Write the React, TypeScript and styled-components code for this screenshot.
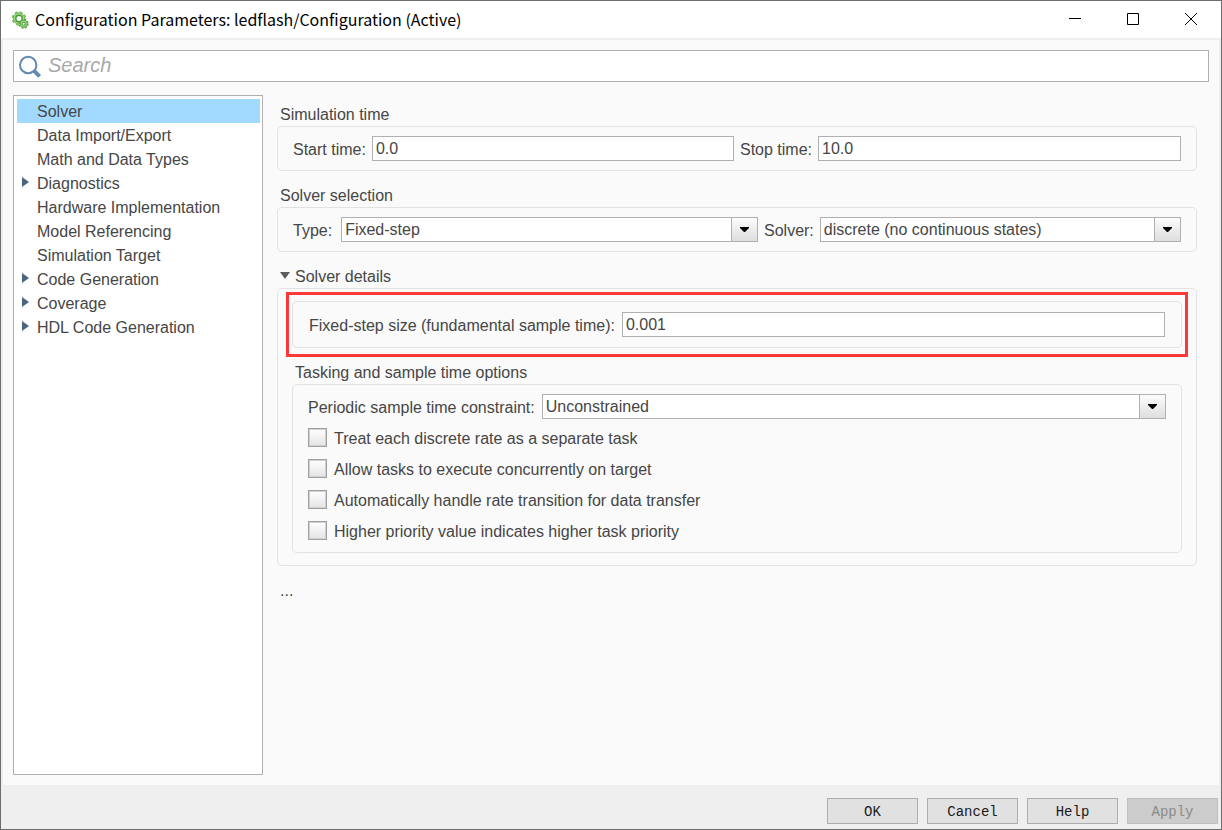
import React from "react";
import styled, { createGlobalStyle } from "styled-components";

const GlobalStyle = createGlobalStyle`
  *, *::before, *::after { box-sizing: border-box; }
  body { margin: 0; }
  body, button, input, select {
    font-family: "Liberation Sans", Arial, sans-serif;
    font-size: 16px;
    color: #464646;
  }
`;

const Window = styled.div`
  display: flex;
  flex-direction: column;
  min-height: 100vh;
  border: 1px solid #6e6e6e;
  background: #efefef;
`;

const TitleBar = styled.header`
  display: flex;
  align-items: center;
  height: 37px;
  padding: 0 1px 0 10px;
  background: #fff;
`;

const Title = styled.h1`
  flex: 1;
  margin: 0 0 0 6px;
  padding-bottom: 2px;
  font: 400 16px/20px "Noto Sans CJK SC", sans-serif;
  color: #000;
`;

const WindowButton = styled.button`
  display: flex;
  align-items: center;
  justify-content: center;
  width: 58px;
  height: 36px;
  padding: 0 0 2px;
  border: 0;
  background: none;
`;

const Body = styled.div`
  flex: 1;
  display: flex;
  flex-direction: column;
  gap: 13px;
  margin: 2px 2px 0;
  padding: 10px;
  background: #fafafa;
`;

const SearchBox = styled.label`
  display: flex;
  align-items: center;
  gap: 7px;
  height: 32px;
  padding-left: 5px;
  border: 1px solid #b0b0b0;
  background: #fff;
`;

const SearchInput = styled.input`
  flex: 1;
  height: 28px;
  padding: 0 0 2px;
  border: 0;
  outline: 0;
  background: none;
  font-size: 20px;
  font-style: italic;
  &::placeholder { color: #a9a9a9; opacity: 1; }
`;

const Columns = styled.div`
  flex: 1;
  display: flex;
  gap: 14px;
`;

const Tree = styled.nav`
  flex: 0 0 250px;
  padding: 3px 2px 3px 3px;
  border: 1px solid #b0b0b0;
  background: #fff;
`;

const TreeItem = styled.a<{ $selected?: boolean }>`
  display: flex;
  align-items: center;
  height: 24px;
  padding: 2px 0 0 5px;
  line-height: 22px;
  color: inherit;
  text-decoration: none;
  background: ${(p) => (p.$selected ? "#a2d9ff" : "none")};
`;

const TreeMarker = styled.span`
  display: flex;
  width: 15px;
  padding-bottom: 4px;
`;

const Panel = styled.main`
  flex: 1;
  min-width: 0;
  display: flex;
  flex-direction: column;
  gap: 14px;
  padding: 9px 12px 0 0;
`;

const Section = styled.section`
  display: flex;
  flex-direction: column;
`;

const SectionTitle = styled.h2`
  display: flex;
  align-items: center;
  margin: 0;
  padding-left: 3px;
  font-size: 16px;
  font-weight: 400;
  line-height: 22px;
`;

const Disclosure = styled.button`
  display: flex;
  align-items: center;
  gap: 5px;
  padding: 0;
  border: 0;
  background: none;
  line-height: 22px;
`;

const DisclosureMarker = styled.svg`
  margin-bottom: 2px;
`;

const MoreButton = styled.button`
  align-self: flex-start;
  padding: 0 3px;
  border: 0;
  background: none;
  line-height: 22px;
`;

const Group = styled.div`
  border: 1px solid #e2e2e2;
  border-radius: 5px;
  padding: 9px 15px;
`;

const DetailsGroup = styled(Group)`
  display: flex;
  flex-direction: column;
  gap: 14px;
  padding: 12px 14px;
`;

const StepGroup = styled(Group)`
  position: relative;
  padding: 10px 16px;
`;

const Highlight = styled.div`
  position: absolute;
  inset: -10px -7px;
  border: 3px solid #fc3838;
  pointer-events: none;
`;

const TaskingGroup = styled(Group)`
  padding-bottom: 6px;
`;

const Row = styled.div`
  display: flex;
  gap: 6px;
`;

const Field = styled.div<{ $grow?: number; $gap?: number }>`
  flex: ${(p) => p.$grow ?? 1} 1 0;
  min-width: 0;
  display: flex;
  gap: ${(p) => p.$gap ?? 7}px;
`;

const FieldLabel = styled.label`
  height: 25px;
  line-height: 27px;
  white-space: nowrap;
`;

const TextInput = styled.input`
  flex: 1;
  min-width: 0;
  height: 25px;
  padding: 0 3px;
  border: 1px solid #b0b0b0;
  background: #fff;
`;

const SelectFrame = styled.div`
  flex: 1;
  min-width: 0;
  display: grid;
  grid-template-columns: 1fr 26px;
  height: 25px;
  border: 1px solid #b0b0b0;
  background: #fff;
`;

const NativeSelect = styled.select`
  grid-area: 1 / 1 / 2 / 3;
  min-width: 0;
  appearance: none;
  padding: 0 26px 0 3px;
  border: 0;
  background: none;
`;

const SelectArrow = styled.span`
  grid-area: 1 / 2 / 2 / 3;
  display: flex;
  align-items: center;
  justify-content: center;
  border-left: 1px solid #b0b0b0;
  background: linear-gradient(#fcfcfc, #dedede);
  pointer-events: none;
`;

const Checks = styled.div`
  margin-top: 3px;
`;

const CheckRow = styled.label`
  display: flex;
  align-items: center;
  gap: 7px;
  height: 31px;
  line-height: 31px;
`;

const CheckText = styled.span`
  padding-top: 2px;
`;

const CheckBox = styled.input`
  appearance: none;
  width: 19px;
  height: 19px;
  margin: 0;
  border: 1px solid #a0a0a0;
  background: linear-gradient(#fff, #e4e4e4);
  box-shadow: inset 0 0 0 1px #d0d0d0;
`;

const Footer = styled.footer`
  display: flex;
  justify-content: flex-end;
  gap: 9px;
  padding: 13px 3px 5px;
`;

const DialogButton = styled.button`
  width: 91px;
  height: 26px;
  padding: 2px 0 0;
  border: 1px solid #adadad;
  background: #e1e1e1;
  font-family: "Liberation Mono", monospace;
  font-size: 14px;
  color: #1a1a1a;
  &:disabled {
    border-color: #bfbfbf;
    background: #cccccc;
    color: #8a8a8a;
  }
`;

const treeItems = [
  { name: "Solver", selected: true },
  { name: "Data Import/Export" },
  { name: "Math and Data Types" },
  { name: "Diagnostics", nested: true },
  { name: "Hardware Implementation" },
  { name: "Model Referencing" },
  { name: "Simulation Target" },
  { name: "Code Generation", nested: true },
  { name: "Coverage", nested: true },
  { name: "HDL Code Generation", nested: true },
];

const taskOptions = [
  "Treat each discrete rate as a separate task",
  "Allow tasks to execute concurrently on target",
  "Automatically handle rate transition for data transfer",
  "Higher priority value indicates higher task priority",
];

function GearIcon() {
  return (
    <svg width="18" height="18" viewBox="0 0 18 18" aria-hidden="true">
      <circle cx="8" cy="7.5" r="6.3" fill="none" stroke="#7fc063" strokeWidth="2" strokeDasharray="2.8 2.15" />
      <circle cx="8" cy="7.5" r="5.6" fill="#a9dc88" stroke="#6db351" strokeWidth="1" />
      <circle cx="8" cy="7.5" r="3.2" fill="#f2faec" stroke="#4a963b" strokeWidth="1.4" />
      <circle cx="12.7" cy="12.8" r="4.2" fill="none" stroke="#5aa545" strokeWidth="1.6" strokeDasharray="1.9 1.4" />
      <circle cx="12.7" cy="12.8" r="3.6" fill="#b4e08c" stroke="#5aa545" strokeWidth="1" />
      <circle cx="12.7" cy="12.8" r="1.6" fill="#f2faec" stroke="#3f8a35" strokeWidth="1" />
    </svg>
  );
}

function SearchIcon() {
  return (
    <svg width="22" height="24" viewBox="0 0 22 24" aria-hidden="true">
      <circle cx="9.2" cy="11" r="8.2" fill="none" stroke="#6389b1" strokeWidth="2" />
      <path d="M14.6 16.4L20.6 22.4" stroke="#6389b1" strokeWidth="4" />
    </svg>
  );
}

type SelectProps = { id: string; value: string };

function Select({ id, value }: SelectProps) {
  return (
    <SelectFrame>
      <NativeSelect id={id} defaultValue={value}>
        <option>{value}</option>
      </NativeSelect>
      <SelectArrow>
        <svg width="9" height="5" viewBox="0 0 9 5" aria-hidden="true">
          <path d="M0 0H9V1L5 5H4L0 1Z" fill="#000" />
        </svg>
      </SelectArrow>
    </SelectFrame>
  );
}

export default function App() {
  return (
    <>
      <GlobalStyle />
      <Window>
        <TitleBar>
          <GearIcon />
          <Title>Configuration Parameters: ledflash/Configuration (Active)</Title>
          <WindowButton aria-label="Minimize">
            <svg width="12" height="12" viewBox="0 0 12 12"><path d="M0 5.5H12" stroke="#000" /></svg>
          </WindowButton>
          <WindowButton aria-label="Maximize">
            <svg width="12" height="12" viewBox="0 0 12 12"><path d="M.5 .5H11.5V11.5H.5Z" fill="none" stroke="#000" /></svg>
          </WindowButton>
          <WindowButton aria-label="Close">
            <svg width="12" height="12" viewBox="0 0 12 12"><path d="M0 0L12 12M12 0L0 12" stroke="#000" /></svg>
          </WindowButton>
        </TitleBar>
        <Body>
          <SearchBox>
            <SearchIcon />
            <SearchInput type="text" aria-label="Search" placeholder="Search" />
          </SearchBox>
          <Columns>
            <Tree>
              {treeItems.map((item) => (
                <TreeItem key={item.name} href="#" $selected={item.selected}>
                  <TreeMarker>
                    {item.nested && (
                      <svg width="7" height="10" viewBox="0 0 7 10" aria-hidden="true">
                        <path d="M0 0L7 5L0 10Z" fill="#4c6580" />
                      </svg>
                    )}
                  </TreeMarker>
                  {item.name}
                </TreeItem>
              ))}
            </Tree>
            <Panel>
              <Section>
                <SectionTitle>Simulation time</SectionTitle>
                <Group>
                  <Row>
                    <Field $gap={6}>
                      <FieldLabel htmlFor="start">Start time:</FieldLabel>
                      <TextInput id="start" defaultValue="0.0" />
                    </Field>
                    <Field $gap={6}>
                      <FieldLabel htmlFor="stop">Stop time:</FieldLabel>
                      <TextInput id="stop" defaultValue="10.0" />
                    </Field>
                  </Row>
                </Group>
              </Section>
              <Section>
                <SectionTitle>Solver selection</SectionTitle>
                <Group>
                  <Row>
                    <Field $grow={465} $gap={9}>
                      <FieldLabel htmlFor="type">Type:</FieldLabel>
                      <Select id="type" value="Fixed-step" />
                    </Field>
                    <Field $grow={417} $gap={6}>
                      <FieldLabel htmlFor="solver">Solver:</FieldLabel>
                      <Select id="solver" value="discrete (no continuous states)" />
                    </Field>
                  </Row>
                </Group>
              </Section>
              <Section>
                <SectionTitle>
                  <Disclosure aria-expanded="true">
                    <DisclosureMarker width="10" height="8" viewBox="0 0 10 8" aria-hidden="true">
                      <path d="M0 0H10L5 7Z" fill="#5c5c5c" />
                    </DisclosureMarker>
                    Solver details
                  </Disclosure>
                </SectionTitle>
                <DetailsGroup>
                  <StepGroup>
                    <Row>
                      <Field>
                        <FieldLabel htmlFor="step">Fixed-step size (fundamental sample time):</FieldLabel>
                        <TextInput id="step" defaultValue="0.001" />
                      </Field>
                    </Row>
                    <Highlight />
                  </StepGroup>
                  <Section>
                    <SectionTitle>Tasking and sample time options</SectionTitle>
                    <TaskingGroup>
                      <Row>
                        <Field>
                          <FieldLabel htmlFor="constraint">Periodic sample time constraint:</FieldLabel>
                          <Select id="constraint" value="Unconstrained" />
                        </Field>
                      </Row>
                      <Checks>
                        {taskOptions.map((text) => (
                          <CheckRow key={text}>
                            <CheckBox type="checkbox" />
                            <CheckText>{text}</CheckText>
                          </CheckRow>
                        ))}
                      </Checks>
                    </TaskingGroup>
                  </Section>
                </DetailsGroup>
              </Section>
              <MoreButton aria-label="Show more parameters">...</MoreButton>
            </Panel>
          </Columns>
        </Body>
        <Footer>
          <DialogButton>OK</DialogButton>
          <DialogButton>Cancel</DialogButton>
          <DialogButton>Help</DialogButton>
          <DialogButton disabled>Apply</DialogButton>
        </Footer>
      </Window>
    </>
  );
}
